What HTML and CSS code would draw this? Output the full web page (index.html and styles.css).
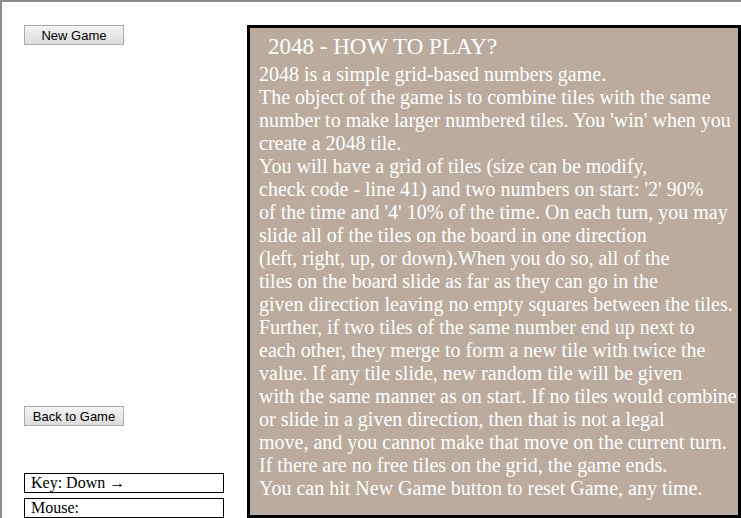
FILE: index.html
```html
<!DOCTYPE html>
<html>
<head>
<meta charset="utf-8">
<link rel="stylesheet" href="styles.css">
</head>
<body>
<div class="frame">
  <div class="side">
    <button class="btn btn-new">New Game</button>
    <button class="btn btn-back">Back to Game</button>
    <div class="status status-key">Key: Down &#8594;</div>
    <div class="status status-mouse">Mouse:</div>
  </div>
  <div class="panel">
    <h2 class="panel-title">2048 - HOW TO PLAY?</h2>
    <p class="panel-text">2048 is a simple grid-based numbers game.<br>
The object of the game is to combine tiles with the same<br>
number to make larger numbered tiles. You 'win' when you<br>
create a 2048 tile.<br>
You will have a grid of tiles (size can be modify,<br>
check code - line 41) and two numbers on start: '2' 90%<br>
of the time and '4' 10% of the time. On each turn, you may<br>
slide all of the tiles on the board in one direction<br>
(left, right, up, or down).When you do so, all of the<br>
tiles on the board slide as far as they can go in the<br>
given direction leaving no empty squares between the tiles.<br>
Further, if two tiles of the same number end up next to<br>
each other, they merge to form a new tile with twice the<br>
value. If any tile slide, new random tile will be given<br>
with the same manner as on start. If no tiles would combine<br>
or slide in a given direction, then that is not a legal<br>
move, and you cannot make that move on the current turn.<br>
If there are no free tiles on the grid, the game ends.<br>
You can hit New Game button to reset Game, any time.</p>
  </div>
</div>
</body>
</html>
```
FILE: styles.css
```css
html, body {
  margin: 0;
  padding: 0;
  background: #ffffff;
  overflow: hidden;
}
.frame {
  display: flex;
  align-items: flex-start;
  border-top: 2px solid #8c8c8c;
  border-left: 2px solid #8c8c8c;
  width: 741px;
  height: 518px;
  box-sizing: border-box;
  padding: 23px 0 0 22px;
  overflow: hidden;
}
.side {
  width: 200px;
  flex: none;
  display: flex;
  flex-direction: column;
  align-items: flex-start;
}
.btn {
  width: 100px;
  height: 20px;
  box-sizing: border-box;
  padding: 0;
  font-family: "Liberation Sans", Arial, sans-serif;
  font-size: 13px;
  color: #000;
  background: linear-gradient(#f4f4f4, #dcdcdc);
  border: 1px solid #acacac;
  border-radius: 0;
}
.btn-back {
  margin-top: 361px;
}
.status {
  width: 200px;
  height: 20px;
  box-sizing: border-box;
  border: 1px solid #000;
  padding: 0 0 0 6px;
  font-family: "Liberation Serif", "Times New Roman", serif;
  font-size: 16px;
  line-height: 18px;
  color: #000;
}
.status-key {
  margin-top: 47px;
}
.status-mouse {
  margin-top: 5px;
}
.panel {
  flex: none;
  margin-left: 23px;
  width: 494px;
  height: 493px;
  box-sizing: border-box;
  border: 3px solid #000;
  background: #baab9e;
  color: #ffffff;
  font-family: "Liberation Serif", "Times New Roman", serif;
}
.panel-title {
  margin: 6px 0 0 18px;
  font-size: 23px;
  font-weight: normal;
  line-height: 26px;
}
.panel-text {
  margin: 3px 0 0 9px;
  font-size: 20px;
  line-height: 23px;
  white-space: nowrap;
}
```
